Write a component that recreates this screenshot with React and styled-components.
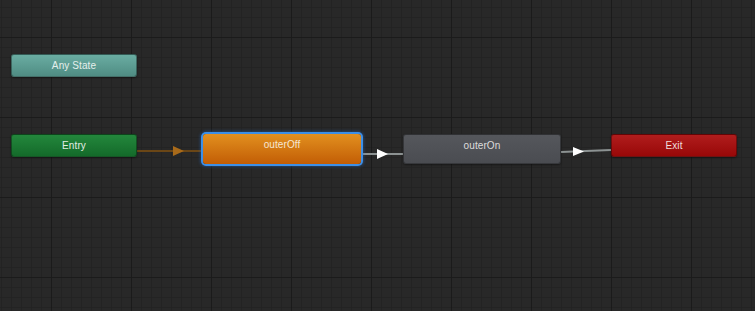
import React from 'react';
import styled, { createGlobalStyle, css } from 'styled-components';

const GlobalStyle = createGlobalStyle`
  html, body {
    margin: 0;
    padding: 0;
    background: #282828;
    overflow: hidden;
  }
`;

const Canvas = styled.div`
  position: relative;
  width: 755px;
  height: 311px;
  overflow: hidden;
  background-color: #282828;
  background-image:
    linear-gradient(to right, #1b1b1b 1px, transparent 1px),
    linear-gradient(to bottom, #1b1b1b 1px, transparent 1px),
    linear-gradient(to right, #232323 1px, transparent 1px),
    linear-gradient(to bottom, #232323 1px, transparent 1px);
  background-size: 80px 80px, 80px 80px, 10px 10px, 10px 10px;
  background-position: 51px 0, 0 37px, 1px 0, 0 7px;
  font-family: 'Liberation Sans', Arial, sans-serif;
`;

const variants = {
  any: css`
    background: linear-gradient(to bottom, #6aada2, #4f8c83);
    color: #e4efec;
  `,
  entry: css`
    background: linear-gradient(to bottom, #23873c, #146a2a);
    color: #e2eee4;
  `,
  active: css`
    background: linear-gradient(to bottom, #e2901f, #c25d05);
    color: #f6e7d2;
  `,
  normal: css`
    background: linear-gradient(to bottom, #55575c, #4a4c51);
    color: #dcdcdc;
  `,
  exit: css`
    background: linear-gradient(to bottom, #b01d1d, #980808);
    color: #f0dede;
  `,
};

const Node = styled.div`
  position: absolute;
  box-sizing: border-box;
  border-radius: 3px;
  border: 1px solid rgba(0, 0, 0, 0.35);
  box-shadow: 0 1px 2px rgba(0, 0, 0, 0.4);
  display: flex;
  flex-direction: column;
  ${(p) => variants[p.$variant]}
  ${(p) =>
    p.$selected &&
    css`
      border: none;
      box-shadow: 0 0 0 2px #3c8fe8, 0 0 3px 3px rgba(40, 110, 200, 0.4);
    `}
`;

const Label = styled.div`
  height: 22px;
  line-height: 22px;
  text-align: center;
  font-size: 10px;
  letter-spacing: 0.1px;
`;

const Links = styled.svg`
  position: absolute;
  left: 0;
  top: 0;
  pointer-events: none;
`;

const nodes = [
  { id: 'any', label: 'Any State', x: 11, y: 54, w: 126, h: 23, variant: 'any' },
  { id: 'entry', label: 'Entry', x: 11, y: 134, w: 126, h: 23, variant: 'entry' },
  { id: 'off', label: 'outerOff', x: 203, y: 134, w: 158, h: 30, variant: 'active', selected: true },
  { id: 'on', label: 'outerOn', x: 403, y: 134, w: 158, h: 30, variant: 'normal' },
  { id: 'exit', label: 'Exit', x: 611, y: 134, w: 126, h: 23, variant: 'exit' },
];

export default function App() {
  return (
    <>
      <GlobalStyle />
      <Canvas>
        <Links width="755" height="311" viewBox="0 0 755 311">
          <line x1="137" y1="151" x2="203" y2="151" stroke="#6a4616" strokeWidth="2" />
          <polygon points="173,146 184,151 173,156" fill="#a86a1a" />
          <line x1="361" y1="154" x2="403" y2="154" stroke="#8c9292" strokeWidth="2" />
          <polygon points="377,149 388,154 377,159" fill="#ffffff" />
          <line x1="561" y1="152" x2="611" y2="150" stroke="#8c9292" strokeWidth="2" />
          <polygon points="573,147 584,151.5 573,156" fill="#ffffff" />
        </Links>
        {nodes.map((n) => (
          <Node
            key={n.id}
            $variant={n.variant}
            $selected={n.selected}
            style={{ left: n.x, top: n.y, width: n.w, height: n.h }}
          >
            <Label>{n.label}</Label>
          </Node>
        ))}
      </Canvas>
    </>
  );
}
